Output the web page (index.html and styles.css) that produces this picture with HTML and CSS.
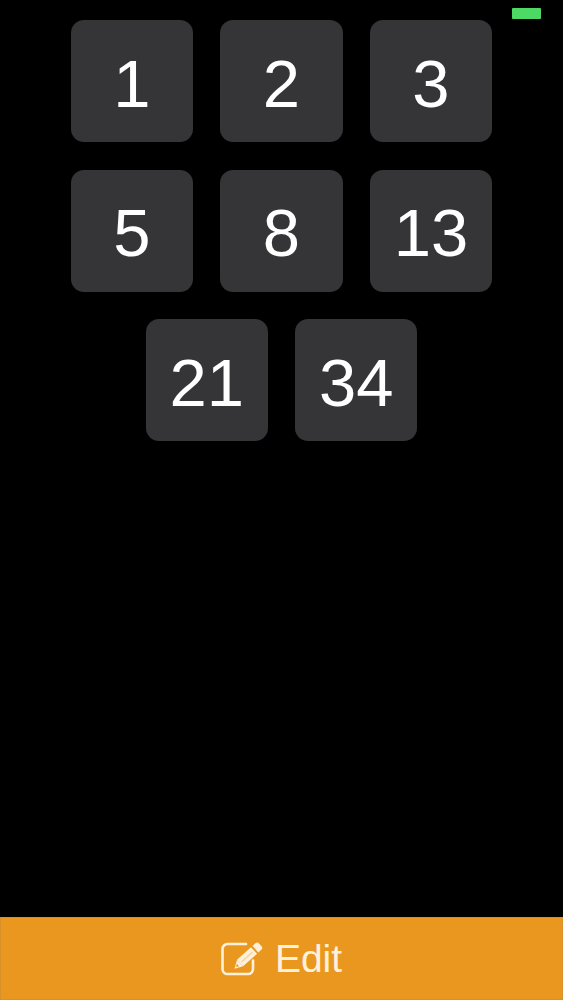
FILE: index.html
```html
<!DOCTYPE html>
<html lang="en">

<head>
    <meta charset="UTF-8">
    <title>Cards</title>
    <link rel="stylesheet" href="styles.css">
</head>

<body>

    <div class="battery"></div>

    <div class="cards">
        <div class="card">1</div>
        <div class="card">2</div>
        <div class="card">3</div>
        <div class="card">5</div>
        <div class="card">8</div>
        <div class="card">13</div>
        <div class="card">21</div>
        <div class="card">34</div>
    </div>

    <button class="edit-btn">
        <svg class="edit-icon" viewBox="0 0 42 36" width="42" height="36" fill="none">
            <path d="M25 3H6.5a5 5 0 0 0-5 5v20a5 5 0 0 0 5 5h20.500a5 5 0 0 0 5-5v-8.500" stroke="currentColor" stroke-width="2.600" stroke-linecap="round"/>
            <path d="M16 18.700l6 6.600-8.500 2.500z" fill="currentColor"/>
            <path d="M16 18.700L30 6.200l6 6.600-14 12.500z" fill="currentColor"/>
            <path d="M31.500 4.900l3-2.700a2.500 2.500 0 0 1 3.500.2l2.500 2.800a2.500 2.500 0 0 1-.2 3.500l-3 2.700z" fill="currentColor"/>
            <path d="M15.800 22.700l2.300 2.500-3 .8z" fill="#ea9720"/>
            <path d="M20.500 21L31.500 11" stroke="#ea9720" stroke-opacity="0.35" stroke-width="1.500"/>
        </svg>
        <span>Edit</span>
    </button>

</body>

</html>
```

FILE: styles.css
```css
html,
body {
    height: 100%;
}

body {
    margin: 0;
    background: #000;
    font-family: "Liberation Sans", Arial, sans-serif;
    display: flex;
    flex-direction: column;
}

.battery {
    position: absolute;
    top: 8px;
    left: 512px;
    width: 29px;
    height: 11px;
    background: #4cd964;
    border-radius: 1px;
}

.cards {
    flex: 1;
    width: 421.3px;
    margin-left: 70.8px;
    padding-top: 20px;
    display: flex;
    flex-wrap: wrap;
    justify-content: center;
    align-content: flex-start;
    gap: 27.7px 27.2px;
}

.card {
    box-sizing: border-box;
    width: 122.3px;
    height: 122px;
    padding-top: 4px;
    background: #353437;
    border-radius: 13px;
    color: #fff;
    font-size: 67px;
    display: flex;
    justify-content: center;
    align-items: center;
}

.edit-btn {
    height: 83px;
    border: 1px solid #d8902c;
    background: #ea9720;
    color: #fdf1dc;
    font-family: inherit;
    font-size: 39px;
    display: flex;
    justify-content: center;
    align-items: center;
    gap: 12px;
}
```
